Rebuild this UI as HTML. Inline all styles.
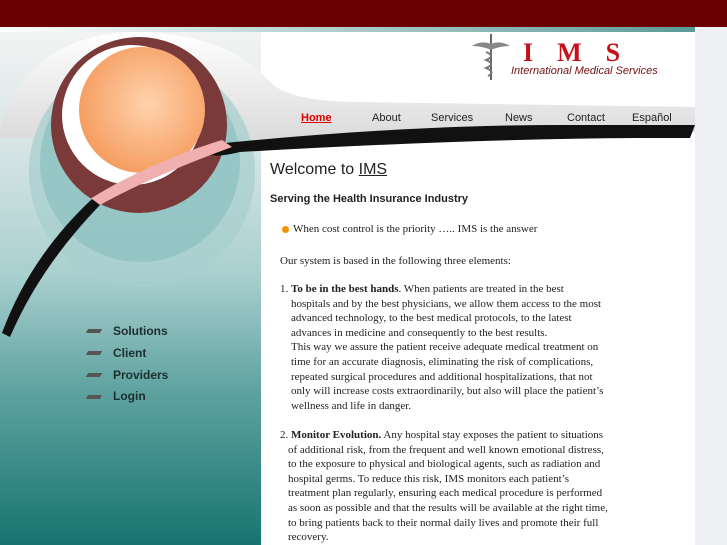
<!DOCTYPE html>
<html><head><meta charset="utf-8"><style>
body{margin:0;width:727px;height:545px;overflow:hidden;background:#eef0f3;position:relative;font-family:"Liberation Serif",serif}
.a{position:absolute}
.top{left:0;top:0;width:727px;height:27px;background:#6b0000}
.left{left:0;top:27px;width:261px;height:518px;background:linear-gradient(#f4f4f4 0%,#d4e3e3 25%,#a9cfcf 48%,#5fa3a0 70%,#177470 100%)}
.main{left:261px;top:27px;width:434px;height:518px;background:#fff}
.nav{top:112px;font:11px "Liberation Sans",sans-serif;color:#222}
.side{left:113px;font:bold 12px "Liberation Sans",sans-serif;color:#1d2e30}
.dash{left:87px;width:14px;height:4px;background:#555;transform:skewX(-30deg)}
.t{font-size:11px;line-height:14.6px;color:#222;white-space:nowrap}
</style></head><body>
<div class="a top"></div>
<div class="a left"></div>
<div class="a main"></div>
<svg class="a" style="left:0;top:27px" width="695" height="320">
<defs><linearGradient id="tl" x1="0" x2="1"><stop offset="0" stop-color="#fff"/><stop offset="1" stop-color="#5a9a98"/></linearGradient>
<linearGradient id="gr" x1="0" y1="0" x2="0" y2="1"><stop offset="0" stop-color="#fff"/><stop offset="1" stop-color="#d8d8d8"/></linearGradient>
<radialGradient id="or" cx="0.55" cy="0.45" r="0.6"><stop offset="0" stop-color="#ffd2ac"/><stop offset="1" stop-color="#f59a5c"/></radialGradient></defs>
<rect x="0" y="0" width="695" height="5" fill="url(#tl)"/>
<path d="M0 100 Q30 5 140 5 Q230 8 270 55 Q290 75 360 75 L695 80 L695 105 L300 120 L0 110Z" fill="url(#gr)"/>
<ellipse cx="142" cy="145" rx="113" ry="115" fill="#a8cfcf" opacity="0.75"/>
<ellipse cx="140" cy="135" rx="100" ry="100" fill="#8ac0bf" opacity="0.7"/>
<ellipse cx="139" cy="98" rx="88" ry="88" fill="#7a3a3a"/>
<ellipse cx="132" cy="88" rx="70" ry="70" fill="#fff"/>
<ellipse cx="142" cy="83" rx="63" ry="63" fill="url(#or)"/>
<path d="M205 118 Q400 98 560 98 L695 98 L690 111 Q500 110 240 125 Q220 130 210 128Z" fill="#111"/>
<path d="M222 113 L232 120 Q150 150 100 178 L90 172 Q150 135 222 113Z" fill="#f0b0b0"/>
<path d="M92 172 L100 178 Q40 240 10 310 L2 306 Q30 230 92 172Z" fill="#111"/>
</svg>
<svg class="a" style="left:472px;top:34px" width="40" height="48"><path d="M18 0 L20 0 L20 46 L18 46Z" fill="#666"/><path d="M0 12 Q10 6 19 10 Q28 6 38 12 Q28 12 19 16 Q10 12 0 12Z" fill="#888"/><path d="M14 18 Q24 22 14 26 Q24 30 14 34 Q24 38 16 42" stroke="#777" fill="none" stroke-width="2"/></svg>
<div class="a" style="left:523px;top:38px;font:bold 26px 'Liberation Serif',serif;color:#c8101a;letter-spacing:24px">IMS</div>
<div class="a" style="left:511px;top:65px;font:italic 11px 'Liberation Sans',sans-serif;color:#701010">International Medical Services</div>
<div class="a nav" style="left:301px;color:#e00000;font-weight:bold;text-decoration:underline">Home</div>
<div class="a nav" style="left:372px">About</div>
<div class="a nav" style="left:431px">Services</div>
<div class="a nav" style="left:505px">News</div>
<div class="a nav" style="left:567px">Contact</div>
<div class="a nav" style="left:632px">Español</div>
<div class="a dash" style="top:329px"></div><div class="a side" style="top:324px">Solutions</div>
<div class="a dash" style="top:351px"></div><div class="a side" style="top:346px">Client</div>
<div class="a dash" style="top:373px"></div><div class="a side" style="top:368px">Providers</div>
<div class="a dash" style="top:395px"></div><div class="a side" style="top:389px">Login</div>
<div class="a" style="left:270px;top:161px;font:16px 'Liberation Sans',sans-serif;color:#222">Welcome to <u>IMS</u></div>
<div class="a" style="left:270px;top:193px;font:bold 11px 'Liberation Sans',sans-serif;color:#222">Serving the Health Insurance Industry</div>
<div class="a" style="left:282px;top:226px;width:7px;height:7px;border-radius:50%;background:#f39200"></div>
<div class="a t" style="left:293px;top:222px">When cost control is the priority ….. IMS is the answer</div>
<div class="a t" style="left:280px;top:254px">Our system is based in the following three elements:</div>
<div class="a t" style="left:280px;top:282px">1. <b>To be in the best hands</b>. When patients are treated in the best<div style="padding-left:11px">hospitals and by the best physicians, we allow them access to the most<br>advanced technology, to the best medical protocols, to the latest<br>advances in medicine and consequently to the best results.<br>This way we assure the patient receive adequate medical treatment on<br>time for an accurate diagnosis, eliminating the risk of complications,<br>repeated surgical procedures and additional hospitalizations, that not<br>only will increase costs extraordinarily, but also will place the patient’s<br>wellness and life in danger.</div></div>
<div class="a t" style="left:280px;top:428px">2. <b>Monitor Evolution.</b> Any hospital stay exposes the patient to situations<div style="padding-left:8px">of additional risk, from the frequent and well known emotional distress,<br>to the exposure to physical and biological agents, such as radiation and<br>hospital germs. To reduce this risk, IMS monitors each patient’s<br>treatment plan regularly, ensuring each medical procedure is performed<br>as soon as possible and that the results will be available at the right time,<br>to bring patients back to their normal daily lives and promote their full<br>recovery.</div></div>
</body></html>
